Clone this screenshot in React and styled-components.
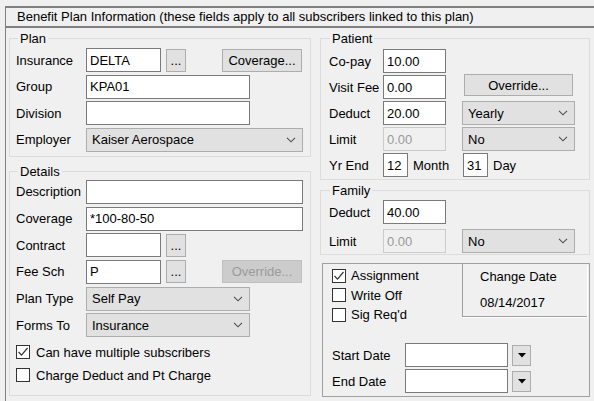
import React from 'react'
import styled, { createGlobalStyle } from 'styled-components'

const GlobalStyle = createGlobalStyle`
  * { box-sizing: border-box; }
  html, body { margin: 0; padding: 0; background: #f0f0f0; }
  body {
    font-family: "Liberation Sans", Arial, sans-serif;
    font-size: 13px;
    color: #000;
    overflow: hidden;
  }
`

const Frame = styled.div`
  margin: 6px 0 0 5px;
  height: 395px;
  border-top: 2px solid #808080;
  border-left: 1px solid #808080;
  display: flex;
  flex-direction: column;
`

const Header = styled.div`
  height: 20px;
  flex: none;
  padding-left: 11px;
  line-height: 18px;
  border-bottom: 2px solid #808080;
  white-space: nowrap;
`

const Body = styled.div`
  flex: 1;
  min-height: 0;
  display: flex;
  gap: 9px;
  padding: 3px 0 0 3px;
`

const Column = styled.div`
  width: ${p => p.$w}px;
  flex: none;
  display: flex;
  flex-direction: column;
  padding-bottom: ${p => p.$pb}px;
`

const Group = styled.fieldset`
  margin: ${p => p.$mt || 0}px 0 0;
  padding: ${p => p.$pad};
  border: 1px solid #dcdcdc;
  min-width: 0;
  flex: ${p => (p.$grow ? 1 : 'none')};
`

const Legend = styled.legend`
  margin-left: ${p => p.$ml ?? 2}px;
  padding: 0 2px;
  line-height: 15px;
`

const Rows = styled.div`
  display: flex;
  flex-direction: column;
  gap: ${p => p.$gap}px;
`

const Row = styled.div`
  display: flex;
  align-items: center;
  height: ${p => p.$h || 24}px;
  flex: none;
`

const Label = styled.span`
  width: ${p => p.$w}px;
  flex: none;
  white-space: nowrap;
`

const Unit = styled.span`
  width: ${p => (p.$w ? `${p.$w}px` : 'auto')};
  padding-left: 5px;
  flex: none;
`

const TextBox = styled.input`
  flex: none;
  width: ${p => p.$w}px;
  height: 24px;
  margin: 0 0 0 ${p => p.$ml || 0}px;
  padding: 0 3px;
  border: 1px solid ${p => (p.disabled ? '#cccccc' : '#7a7a7a')};
  border-radius: 0;
  background: ${p => (p.disabled ? '#f0f0f0' : '#ffffff')};
  color: ${p => (p.disabled ? '#9a9a9a' : '#000')};
  font: inherit;
  outline: none;
`

const Button = styled.button`
  flex: none;
  align-self: ${p => (p.$top ? 'flex-start' : 'center')};
  width: ${p => p.$w}px;
  height: ${p => p.$h || 23}px;
  margin: ${p => (p.$top ? '-1px' : '0')} 0 0 ${p => p.$ml || 0}px;
  padding: 0;
  border: 1px solid ${p => (p.disabled ? '#bfbfbf' : '#adadad')};
  border-radius: 0;
  background: ${p => (p.disabled ? '#cccccc' : '#e1e1e1')};
  color: ${p => (p.disabled ? '#9b9b9b' : '#000')};
  font: inherit;
  white-space: nowrap;
`

const SelectBox = styled.div`
  flex: none;
  width: ${p => p.$w}px;
  height: 24px;
  margin-left: ${p => p.$ml || 0}px;
  display: flex;
  align-items: center;
  justify-content: space-between;
  padding: 0 6px 0 5px;
  border: 1px solid #adadad;
  background: #e1e1e1;
  white-space: nowrap;
`

const Chevron = () => (
  <svg width="10" height="6" viewBox="0 0 10 6">
    <path d="M1 0.8 L5 4.8 L9 0.8" fill="none" stroke="#4d4d4d" strokeWidth="1.1" />
  </svg>
)

const Dropdown = ({ w, ml, children }) => (
  <SelectBox $w={w} $ml={ml}>
    <span>{children}</span>
    <Chevron />
  </SelectBox>
)

const CheckRow = styled.div`
  display: flex;
  align-items: center;
  height: ${p => p.$h}px;
  white-space: nowrap;
`

const Box = styled.span`
  width: 14px;
  height: 14px;
  flex: none;
  margin-right: ${p => p.$gap}px;
  border: 1px solid #333;
  background: #fff;
  display: flex;
  align-items: center;
  justify-content: center;
`

const Check = ({ checked, h = 20, gap = 6, children }) => (
  <CheckRow $h={h}>
    <Box $gap={gap}>
      {checked && (
        <svg width="12" height="12" viewBox="0 0 12 12">
          <path d="M1.5 6 L4.5 9.2 L10.5 2" fill="none" stroke="#333" strokeWidth="1.2" />
        </svg>
      )}
    </Box>
    {children}
  </CheckRow>
)

const Checks = styled.div`
  margin-top: 5px;
  display: flex;
  flex-direction: column;
  gap: 3px;
`

const Panel = styled.div`
  flex: 1;
  margin: 8px 0 0 2px;
  border: 1px solid #a0a0a0;
  display: flex;
  flex-direction: column;
`

const PanelTop = styled.div`
  display: flex;
`

const CheckCol = styled.div`
  flex: 1;
  padding: 2px 0 0 9px;
`

const ChangeBox = styled.div`
  width: 125px;
  height: 53px;
  margin-right: 2px;
  padding-left: 17px;
  line-height: 26px;
  border-left: 1px solid #a0a0a0;
  border-bottom: 1px solid #a0a0a0;
  box-shadow: 1px 1px 0 #ffffff;
`

const DateRows = styled.div`
  margin-top: auto;
  padding: 0 0 3px 9px;
  display: flex;
  flex-direction: column;
  gap: 2px;
`

const DateButton = styled.div`
  width: 19px;
  height: 21px;
  margin-left: 4px;
  flex: none;
  border: 1px solid #adadad;
  background: #e1e1e1;
  display: flex;
  align-items: center;
  justify-content: center;
`

const Triangle = () => (
  <svg width="8" height="5" viewBox="0 0 8 5">
    <path d="M0 0 H8 L4 4.5 Z" fill="#000" />
  </svg>
)

export default function App() {
  return (
    <>
      <GlobalStyle />
      <Frame>
        <Header>Benefit Plan Information (these fields apply to all subscribers linked to this plan)</Header>
        <Body>
          <Column $w={302} $pb={5}>
            <Group $pad="2px 6px 4px 6px">
              <Legend>Plan</Legend>
              <Rows $gap={2.67}>
                <Row>
                  <Label $w={70}>Insurance</Label>
                  <TextBox $w={75} value="DELTA" readOnly />
                  <Button $w={20} $ml={5}>...</Button>
                  <Button $w={80} $ml={36}>Coverage...</Button>
                </Row>
                <Row>
                  <Label $w={70}>Group</Label>
                  <TextBox $w={164} value="KPA01" readOnly />
                </Row>
                <Row>
                  <Label $w={70}>Division</Label>
                  <TextBox $w={164} value="" readOnly />
                </Row>
                <Row>
                  <Label $w={70}>Employer</Label>
                  <Dropdown w={217}>Kaiser Aerospace</Dropdown>
                </Row>
              </Rows>
            </Group>

            <Group $mt={7} $grow $pad="1px 6px 4px 6px">
              <Legend>Details</Legend>
              <Rows $gap={2.67}>
                <Row>
                  <Label $w={70}>Description</Label>
                  <TextBox $w={217} value="" readOnly />
                </Row>
                <Row>
                  <Label $w={70}>Coverage</Label>
                  <TextBox $w={217} value="*100-80-50" readOnly />
                </Row>
                <Row>
                  <Label $w={70}>Contract</Label>
                  <TextBox $w={75} value="" readOnly />
                  <Button $w={20} $ml={5}>...</Button>
                </Row>
                <Row>
                  <Label $w={70}>Fee Sch</Label>
                  <TextBox $w={75} value="P" readOnly />
                  <Button $w={20} $ml={5}>...</Button>
                  <Button $w={80} $ml={36} disabled>Override...</Button>
                </Row>
                <Row>
                  <Label $w={70}>Plan Type</Label>
                  <Dropdown w={164}>Self Pay</Dropdown>
                </Row>
                <Row>
                  <Label $w={70}>Forms To</Label>
                  <Dropdown w={164}>Insurance</Dropdown>
                </Row>
              </Rows>
              <Checks>
                <Check checked>Can have multiple subscribers</Check>
                <Check>Charge Deduct and Pt Charge</Check>
              </Checks>
            </Group>
          </Column>

          <Column $w={270} $pb={4}>
            <Group $pad="3px 8px 2px 8px">
              <Legend $ml={1}>Patient</Legend>
              <Rows $gap={2}>
                <Row>
                  <Label $w={54}>Co-pay</Label>
                  <TextBox $w={63} value="10.00" readOnly />
                </Row>
                <Row>
                  <Label $w={54}>Visit Fee</Label>
                  <TextBox $w={63} value="0.00" readOnly />
                  <Button $w={109} $h={22} $ml={18} $top>Override...</Button>
                </Row>
                <Row>
                  <Label $w={54}>Deduct</Label>
                  <TextBox $w={63} value="20.00" readOnly />
                  <Dropdown w={113} ml={16}>Yearly</Dropdown>
                </Row>
                <Row>
                  <Label $w={54}>Limit</Label>
                  <TextBox $w={63} value="0.00" disabled readOnly />
                  <Dropdown w={113} ml={16}>No</Dropdown>
                </Row>
                <Row>
                  <Label $w={54}>Yr End</Label>
                  <TextBox $w={25} value="12" readOnly />
                  <Unit $w={55}>Month</Unit>
                  <TextBox $w={25} value="31" readOnly />
                  <Unit>Day</Unit>
                </Row>
              </Rows>
            </Group>

            <Group $mt={3} $pad="2px 8px 1px 8px">
              <Legend $ml={1}>Family</Legend>
              <Rows $gap={5}>
                <Row>
                  <Label $w={54}>Deduct</Label>
                  <TextBox $w={63} value="40.00" readOnly />
                </Row>
                <Row>
                  <Label $w={54}>Limit</Label>
                  <TextBox $w={63} value="0.00" disabled readOnly />
                  <Dropdown w={113} ml={16}>No</Dropdown>
                </Row>
              </Rows>
            </Group>

            <Panel>
              <PanelTop>
                <CheckCol>
                  <Check checked h={19.5} gap={5}>Assignment</Check>
                  <Check h={19.5} gap={5}>Write Off</Check>
                  <Check h={19.5} gap={5}>Sig Req'd</Check>
                </CheckCol>
                <ChangeBox>
                  <div>Change Date</div>
                  <div>08/14/2017</div>
                </ChangeBox>
              </PanelTop>
              <DateRows>
                <Row>
                  <Label $w={73}>Start Date</Label>
                  <TextBox $w={103} value="" readOnly />
                  <DateButton><Triangle /></DateButton>
                </Row>
                <Row>
                  <Label $w={73}>End Date</Label>
                  <TextBox $w={103} value="" readOnly />
                  <DateButton><Triangle /></DateButton>
                </Row>
              </DateRows>
            </Panel>
          </Column>
        </Body>
      </Frame>
    </>
  )
}
